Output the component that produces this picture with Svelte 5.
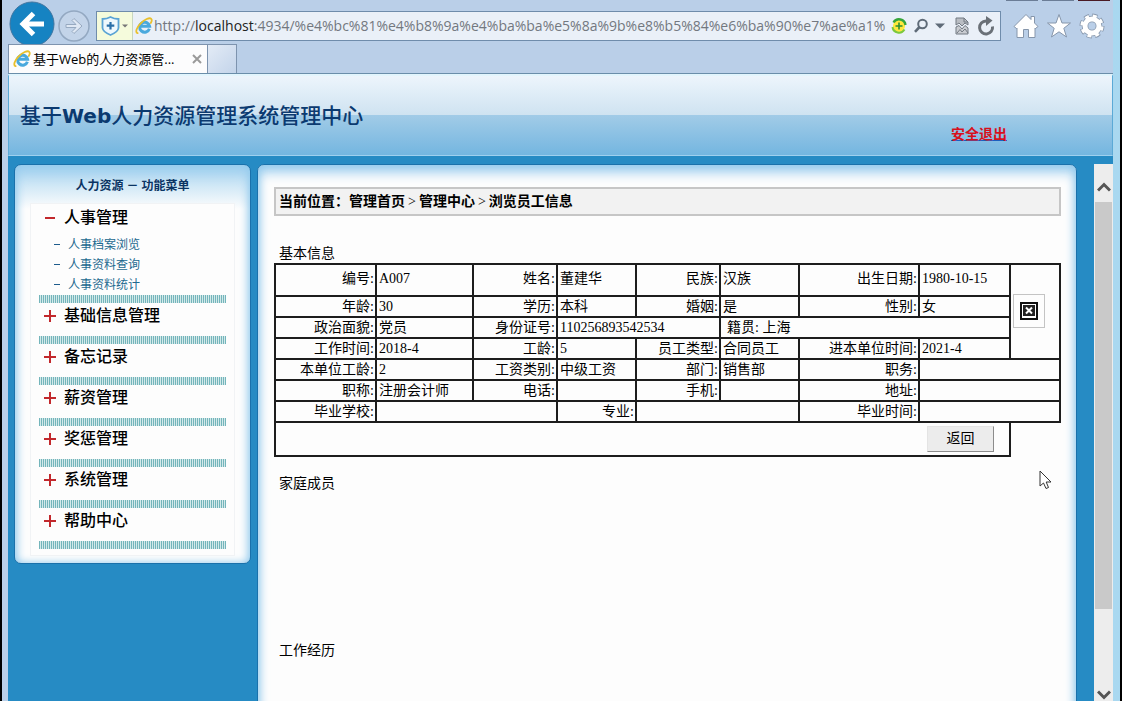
<script lang="ts">
  interface Cell {
    text: string;
    label?: boolean;
    span?: number;
    indent?: boolean;
  }

  const PAGE_URL = ':4934/%e4%bc%81%e4%b8%9a%e4%ba%ba%e5%8a%9b%e8%b5%84%e6%ba%90%e7%ae%a1%';

  const subItems = ['人事档案浏览', '人事资料查询', '人事资料统计'];
  const menuItems = ['基础信息管理', '备忘记录', '薪资管理', '奖惩管理', '系统管理', '帮助中心'];

  const rows: Cell[][] = [
    [
      { text: '编号:', label: true },
      { text: 'A007' },
      { text: '姓名:', label: true },
      { text: '董建华' },
      { text: '民族:', label: true },
      { text: '汉族' },
      { text: '出生日期:', label: true },
      { text: '1980-10-15' },
    ],
    [
      { text: '年龄:', label: true },
      { text: '30' },
      { text: '学历:', label: true },
      { text: '本科' },
      { text: '婚姻:', label: true },
      { text: '是' },
      { text: '性别:', label: true },
      { text: '女' },
    ],
    [
      { text: '政治面貌:', label: true },
      { text: '党员' },
      { text: '身份证号:', label: true },
      { text: '110256893542534', span: 2 },
      { text: '籍贯: 上海', span: 3, indent: true },
    ],
    [
      { text: '工作时间:', label: true },
      { text: '2018-4' },
      { text: '工龄:', label: true },
      { text: '5' },
      { text: '员工类型:', label: true },
      { text: '合同员工' },
      { text: '进本单位时间:', label: true },
      { text: '2021-4' },
    ],
    [
      { text: '本单位工龄:', label: true },
      { text: '2' },
      { text: '工资类别:', label: true },
      { text: '中级工资' },
      { text: '部门:', label: true },
      { text: '销售部' },
      { text: '职务:', label: true },
      { text: '', span: 2 },
    ],
    [
      { text: '职称:', label: true },
      { text: '注册会计师' },
      { text: '电话:', label: true },
      { text: '' },
      { text: '手机:', label: true },
      { text: '' },
      { text: '地址:', label: true },
      { text: '', span: 2 },
    ],
    [
      { text: '毕业学校:', label: true },
      { text: '', span: 2 },
      { text: '专业:', label: true },
      { text: '', span: 2 },
      { text: '毕业时间:', label: true },
      { text: '', span: 2 },
    ],
  ];
</script>

{#snippet ieLogo()}
  <svg class="ie" width="18" height="18" viewBox="0 0 18 18" aria-hidden="true">
    <path
      d="M14.4 11.8A5 5 0 1 1 14.6 9.3H6"
      fill="none"
      stroke="#4aa9dd"
      stroke-width="3"
    />
    <path
      d="M2.6 16.2C0 15.4 1.6 10.6 5.4 6.6C9.4 2.4 14.6 0.2 16.2 1.8C17.2 2.8 16.6 4.6 15.8 6"
      fill="none"
      stroke="#e9c02c"
      stroke-width="1.8"
      stroke-linecap="round"
    />
  </svg>
{/snippet}

<div class="window">
  <div class="toolbar">
    <button class="back" aria-label="后退">
      <svg width="46" height="46" viewBox="0 0 46 46">
        <circle cx="23" cy="23" r="22" fill="#1683c2" stroke="#3f75a0" />
        <path d="M35 23H14M24.500 12.500L14 23L24.500 33.500" fill="none" stroke="#fff" stroke-width="5" />
      </svg>
    </button>
    <button class="forward" aria-label="前进">
      <svg width="32" height="32" viewBox="0 0 32 32">
        <circle cx="16" cy="16" r="15" fill="#c3d4e9" stroke="#93a8c1" stroke-width="1.500" />
        <path
          d="M8 14.500H18L14 10.500L16 8.500L24 16L16 23.500L14 21.500L18 17.500H8Z"
          fill="#dfe8f4"
          stroke="#96a9c0"
        />
      </svg>
    </button>
    <div class="address">
      <button class="shield" aria-label="安全">
        <svg width="30" height="22" viewBox="0 0 30 22">
          <path
            d="M2.500 4Q7 4 10.500 2Q14 4 18.500 4V13Q18 17 10.500 20Q3 17 2.500 13Z"
            fill="#eef8fd"
            stroke="#5aa3d4"
            stroke-width="1.800"
          />
          <path d="M10.500 7V14.500M6.700 10.700H14.300" stroke="#2a6fa8" stroke-width="2.200" />
          <path d="M22 9.500H28L25 12.500Z" fill="#777" />
        </svg>
      </button>
      {@render ieLogo()}
      <div class="url"><span>http://</span><b>localhost</b><span>{PAGE_URL}</span></div>
      <button aria-label="加速">
        <svg width="16" height="18" viewBox="1 0 16 18">
          <circle cx="9" cy="9" r="6" fill="#ffe83c" />
          <path d="M3.500 5.500A6.500 6.500 0 0 1 15.500 8" fill="none" stroke="#36a53a" stroke-width="2.400" />
          <path d="M14.500 12.500A6.500 6.500 0 0 1 2.500 10" fill="none" stroke="#7cc83c" stroke-width="2" />
          <path d="M9 5.500V12.500M5.500 9H12.500" stroke="#2c8f35" stroke-width="1.600" />
        </svg>
      </button>
      <button aria-label="搜索">
        <svg width="14" height="16" viewBox="0 0 14 16">
          <circle cx="8.500" cy="6" r="4.300" fill="none" stroke="#5f6b78" stroke-width="2" />
          <path d="M5.500 9L1 13.800" stroke="#5f6b78" stroke-width="2.600" />
        </svg>
      </button>
      <button class="caret" aria-label="显示历史记录">
        <svg width="10" height="6" viewBox="0 0 10 6"><path d="M0 0.500H10L5 5.500Z" fill="#5f6b78" /></svg>
      </button>
      <button class="compat" aria-label="兼容性视图">
        <svg width="14" height="18" viewBox="0 0 14 18">
          <path d="M1 8V1H9L13 5V8L10 6L7 9L4 6Z" fill="#b9bdc3" stroke="#737a83" />
          <path d="M9 1V5H13" fill="none" stroke="#737a83" />
          <path d="M1 17V10L4 8.500L7 12L10 8.500L13 11V17Z" fill="#c9ccd1" stroke="#737a83" />
          <path d="M2 16L5 12.500L7 15L10 12L13 16" fill="none" stroke="#737a83" />
        </svg>
      </button>
      <button aria-label="刷新">
        <svg width="18" height="20" viewBox="0 0 18 20">
          <path d="M15.500 10.500A6.500 6.500 0 1 1 9 5H11" fill="none" stroke="#6a7077" stroke-width="3" />
          <path d="M9 0L15.500 4.500L9 10Z" fill="#6a7077" />
        </svg>
      </button>
    </div>
    <div class="tools">
      <button aria-label="主页">
        <svg width="26" height="26" viewBox="0 0 26 26">
          <path
            d="M13 1.500L18 6.500V3.500H21.500V10L25 13.500L22.500 15.500L22 15V24.500H15.500V16.500H10.500V24.500H4V15L3.500 15.500L1 13.500Z"
            fill="#fff"
            stroke="#8696ab"
          />
        </svg>
      </button>
      <button aria-label="收藏夹">
        <svg width="26" height="26" viewBox="0 0 26 26">
          <path
            d="M13 1.500L16 10H24.500L17.800 15.300L20.500 24L13 18.800L5.500 24L8.200 15.300L1.500 10H10Z"
            fill="#fff"
            stroke="#8696ab"
          />
        </svg>
      </button>
      <button aria-label="工具">
        <svg width="26" height="26" viewBox="0 0 26 26">
          <circle cx="13" cy="13" r="10" fill="none" stroke="#8696ab" stroke-width="5" stroke-dasharray="4.850 3" />
          <circle cx="13" cy="13" r="7" fill="none" stroke="#8696ab" stroke-width="6.600" />
          <circle cx="13" cy="13" r="9.800" fill="none" stroke="#fff" stroke-width="3.600" stroke-dasharray="3.850 3.850" stroke-dashoffset="-0.500" />
          <circle cx="13" cy="13" r="7" fill="none" stroke="#fff" stroke-width="5" />
        </svg>
      </button>
    </div>
    <div class="caption"><i></i><i></i><i></i></div>
  </div>

  <div class="tabs">
    <div class="tab">
      {@render ieLogo()}
      <span>基于Web的人力资源管...</span>
      <button aria-label="关闭选项卡">
        <svg width="10" height="10" viewBox="0 0 10 10">
          <path d="M1 1L9 9M9 1L1 9" stroke="#9a9a9a" stroke-width="2" />
        </svg>
      </button>
    </div>
    <button class="new-tab" aria-label="新建选项卡"></button>
  </div>

  <div class="page">
    <header>
      <h1>基于<span>Web</span>人力资源管理系统管理中心</h1>
      <a href="#logout">安全退出</a>
    </header>

    <div class="body">
      <nav class="panel sidebar">
        <h2>人力资源 － 功能菜单</h2>
        <div class="menu">
          <button class="group first"><i class="sign"></i>人事管理</button>
          <ul>
            {#each subItems as item}
              <li><a href="#sub">{item}</a></li>
            {/each}
          </ul>
          <div class="strip"></div>
          {#each menuItems as item}
            <button class="group"><i class="sign plus"></i>{item}</button>
            <div class="strip"></div>
          {/each}
        </div>
      </nav>

      <main class="panel">
        <div class="crumbs">
          <b>当前位置：管理首页</b><span>&gt;</span><b>管理中心</b><span>&gt;</span><b>浏览员工信息</b>
        </div>
        <h3>基本信息</h3>
        <table>
          <colgroup>
            <col class="w101" /><col class="w97" /><col class="w84" /><col class="w79" />
            <col class="w84" /><col class="w79" /><col class="w120" /><col class="w91" />
            <col class="w50" />
          </colgroup>
          <tbody>
            {#each rows as row, index}
              <tr class:tall={index === 0}>
                {#each row as cell}
                  {#if cell.label}
                    <th scope="row">{cell.text}</th>
                  {:else}
                    <td colspan={cell.span ?? 1} class:indent={cell.indent}>{cell.text}</td>
                  {/if}
                {/each}
                {#if index === 0}
                  <td rowspan="4">
                    <div class="photo">
                      <svg width="18" height="18" viewBox="0 0 18 18" role="img" aria-label="照片">
                        <rect x="1" y="1" width="16" height="16" fill="#fff" stroke="#111" stroke-width="2" />
                        <rect x="3" y="3" width="12" height="11" fill="#222" />
                        <path d="M6 5.500L12 11.500M12 5.500L6 11.500" stroke="#fff" stroke-width="2" />
                      </svg>
                    </div>
                  </td>
                {/if}
              </tr>
            {/each}
            <tr class="actions">
              <td colspan="8"><button>返回</button></td>
            </tr>
          </tbody>
        </table>
        <h3 class="family">家庭成员</h3>
        <h3 class="career">工作经历</h3>
        <svg class="pointer" width="14" height="20" viewBox="0 0 14 20" aria-hidden="true">
          <path d="M1 1V16L4.500 13L7 18.500L9.500 17.500L7.200 12H12Z" fill="#fff" stroke="#333" />
        </svg>
      </main>

      <div class="scrollbar">
        <svg width="14" height="12" viewBox="0 0 14 12"><path d="M1 9.500L7 3.500L13 9.500" /></svg>
        <div class="thumb"></div>
        <div class="track"></div>
        <svg width="14" height="12" viewBox="0 0 14 12"><path d="M1 2.500L7 8.500L13 2.500" /></svg>
      </div>
    </div>
  </div>
</div>

<style>
  :global(body) {
    background: #000;
  }

  .window {
    box-sizing: border-box;
    height: 100vh;
    margin: 0 2px;
    padding: 0 7px 0 6px;
    display: flex;
    flex-direction: column;
    overflow: hidden;
    background: linear-gradient(to right, #bacfe8 50%, #a9d8f0 100%);
    font-family: 'Liberation Serif', 'Noto Sans CJK SC', serif;
  }

  button {
    padding: 0;
    border: 0;
    background: none;
    font: inherit;
    color: inherit;
  }

  svg {
    display: block;
    flex-shrink: 0;
  }

  .toolbar {
    position: relative;
    display: flex;
    height: 44px;
    align-items: flex-start;
    background: #bacfe8;
    overflow: hidden;
  }

  .back {
    margin: 1px 3px 0 1px;
  }

  .forward {
    margin: 10px 6px 0 0;
  }

  .address {
    flex: 1;
    min-width: 0;
    box-sizing: border-box;
    height: 30px;
    margin-top: 11px;
    display: flex;
    align-items: center;
    gap: 7px;
    padding-right: 5px;
    border: 1px solid #6f8cab;
    background: #eaf0f8;
    color: #737880;
    font: 14px/30px 'Open Sans', 'Noto Sans CJK SC', sans-serif;
  }

  .shield {
    height: 28px;
    padding: 0 3px;
    background: #f5fbdc;
    border-right: 1px solid #c8d6c0;
    box-sizing: border-box;
    width: 36px;
    overflow: hidden;
  }

  .address .ie {
    margin-left: -5px;
  }

  .url {
    flex: 1;
    margin: 0 -7px 0 -6px;
    white-space: nowrap;
  }

  .url b {
    font-weight: 400;
    color: #222;
  }

  .compat {
    margin: 0 1px 0 3px;
  }

  .tools {
    display: flex;
    gap: 7px;
    margin: 13px 8px 0 12px;
  }

  .caption {
    position: absolute;
    top: 0;
    right: 3px;
    display: flex;
    gap: 4px;
  }

  .caption i {
    width: 32px;
    height: 1px;
    background: #6b7d96;
  }

  .caption i:last-child {
    background: #4a1a24;
  }

  .tabs {
    display: flex;
    height: 29px;
    background: #bacfe8;
    border-bottom: 1px solid #6a8eaa;
  }

  .tab {
    box-sizing: border-box;
    width: 200px;
    display: flex;
    align-items: center;
    gap: 2px;
    padding: 0 5px 0 4px;
    border: 1px solid #7d93ae;
    border-bottom: 0;
    background: #fcfcfd;
    font: 13px/28px 'Open Sans', 'Noto Sans CJK SC', sans-serif;
  }

  .tab span {
    flex: 1;
    white-space: nowrap;
  }

  .new-tab {
    width: 29px;
    border: 1px solid #7d93ae;
    border-left: 0;
    border-bottom: 0;
    background: linear-gradient(135deg, #e3ebf6, #c3d4ea);
  }

  .page {
    flex: 1;
    min-height: 0;
    display: flex;
    flex-direction: column;
    background: #268bc4;
  }

  header {
    box-sizing: border-box;
    height: 82px;
    flex-shrink: 0;
    display: flex;
    justify-content: space-between;
    align-items: flex-start;
    padding: 27px 105px 0 11px;
    border: 1px solid #5ba9d6;
    border-top: 2px solid #e2f5fd;
    border-bottom: 1px solid #9fd0ee;
    background: linear-gradient(#edf5fc, #cfe3f1 49%, #a1cbe7 50%, #74b6e0);
  }

  h1 {
    margin: 0;
    font: 500 21px/26px 'DejaVu Sans', 'Noto Sans CJK SC', sans-serif;
    color: #0b3a70;
  }

  h1 span {
    font-size: 20px;
    font-weight: 700;
  }

  header a {
    margin-top: 22px;
    font-size: 14px;
    font-weight: 700;
    line-height: 20px;
    color: #d8101c;
    text-decoration-color: #1c5fc0;
  }

  .body {
    flex: 1;
    min-height: 0;
    display: flex;
    align-items: flex-start;
    padding: 8px 0 0 6px;
    overflow: hidden;
  }

  .panel {
    box-sizing: border-box;
    border: 1px solid #1a71ab;
    border-radius: 7px;
    background: #fdfdfd;
    box-shadow:
      inset 0 0 9px #8fc9ec,
      inset 0 8px 12px #a5d2f0;
  }

  .sidebar {
    width: 237px;
    height: 400px;
    padding: 11px 15px 0;
    margin-right: 6px;
    background: linear-gradient(#a9d5f0, #fdfdfd 44px);
  }

  h2 {
    margin: 0;
    font-size: 12px;
    line-height: 20px;
    font-weight: 700;
    text-align: center;
    color: #0b3463;
  }

  .menu {
    margin-top: 7px;
    padding: 0 8px 6px;
    border: 1px solid #f1f3f5;
    background: #fdfdfd;
  }

  .group {
    display: flex;
    align-items: center;
    width: 100%;
    height: 33px;
    padding: 0 0 7px 5px;
    font-size: 16px;
    line-height: 24px;
    font-weight: 500;
  }

  .group.first {
    height: 30px;
    padding-bottom: 3px;
  }

  .sign {
    width: 12px;
    height: 12px;
    margin-right: 8px;
    background: linear-gradient(#c2282c, #c2282c) center / 10px 2px no-repeat;
  }

  .sign.plus {
    background:
      linear-gradient(#c2282c, #c2282c) center / 12px 2px no-repeat,
      linear-gradient(#c2282c, #c2282c) center / 2px 12px no-repeat;
  }

  ul {
    margin: 0;
    padding: 0 0 1px 15px;
    list-style: none;
  }

  li {
    display: flex;
    align-items: center;
    height: 20px;
    font-size: 12px;
  }

  li::before {
    content: '';
    width: 6px;
    height: 1px;
    margin-right: 8px;
    background: #1d5c8c;
  }

  li a {
    color: #22698f;
    text-decoration: none;
  }

  .strip {
    height: 8px;
    background: repeating-linear-gradient(to right, #74b5bb 0 1px, #d3e9ea 1px 2px);
  }

  main {
    position: relative;
    flex: 1;
    min-width: 0;
    height: 900px;
    padding: 22px 15px 0 16px;
    margin-right: 17px;
  }

  .crumbs {
    box-sizing: border-box;
    height: 29px;
    padding-left: 3px;
    border: 2px solid #c6c6c6;
    background: #f2f2f2;
    font-size: 14px;
    line-height: 25px;
    white-space: nowrap;
  }

  .crumbs span {
    padding: 0 3px;
  }

  h3 {
    margin: 29px 0 0 5px;
    font-size: 14px;
    line-height: 18px;
    font-weight: 400;
  }

  .family {
    margin-top: 18px;
  }

  .career {
    margin-top: 149px;
  }

  table {
    width: 100%;
    table-layout: fixed;
    border-collapse: collapse;
    font-size: 14px;
    line-height: 18px;
  }

  th,
  td {
    height: 19px;
    padding: 0 1px 0 2px;
    border: 2px solid #1d1d1d;
    text-align: left;
    white-space: nowrap;
  }

  th {
    font-weight: 400;
    text-align: right;
  }

  .tall th,
  .tall td {
    height: 28px;
    padding-bottom: 2px;
  }

  .indent {
    padding-left: 6px;
  }

  .photo {
    box-sizing: border-box;
    width: 32px;
    height: 34px;
    padding: 7px 6px;
    border: 1px solid #c4c4c4;
  }

  .actions td {
    height: 32px;
    padding-right: 15px;
    text-align: right;
  }

  .actions button {
    width: 67px;
    height: 26px;
    border: 1px solid #e4e4e4;
    border-right-color: #8c8c8c;
    border-bottom-color: #8c8c8c;
    background: #ececec;
  }

  .w101 { width: 101px; }
  .w97 { width: 97px; }
  .w84 { width: 84px; }
  .w79 { width: 79px; }
  .w120 { width: 120px; }
  .w91 { width: 91px; }
  .w50 { width: 50px; }

  .pointer {
    position: absolute;
    top: 305px;
    right: 23px;
  }

  .scrollbar {
    align-self: stretch;
    width: 19px;
    display: flex;
    flex-direction: column;
    align-items: center;
    background: #ededed;
  }

  .scrollbar svg {
    margin: 17px 0 9px;
  }

  .scrollbar svg:last-child {
    margin: 0;
  }

  .scrollbar path {
    fill: none;
    stroke: #555;
    stroke-width: 3;
  }

  .thumb {
    flex: 81;
    width: 17px;
    background: #c9c9c9;
  }

  .track {
    flex: 16;
  }
</style>
